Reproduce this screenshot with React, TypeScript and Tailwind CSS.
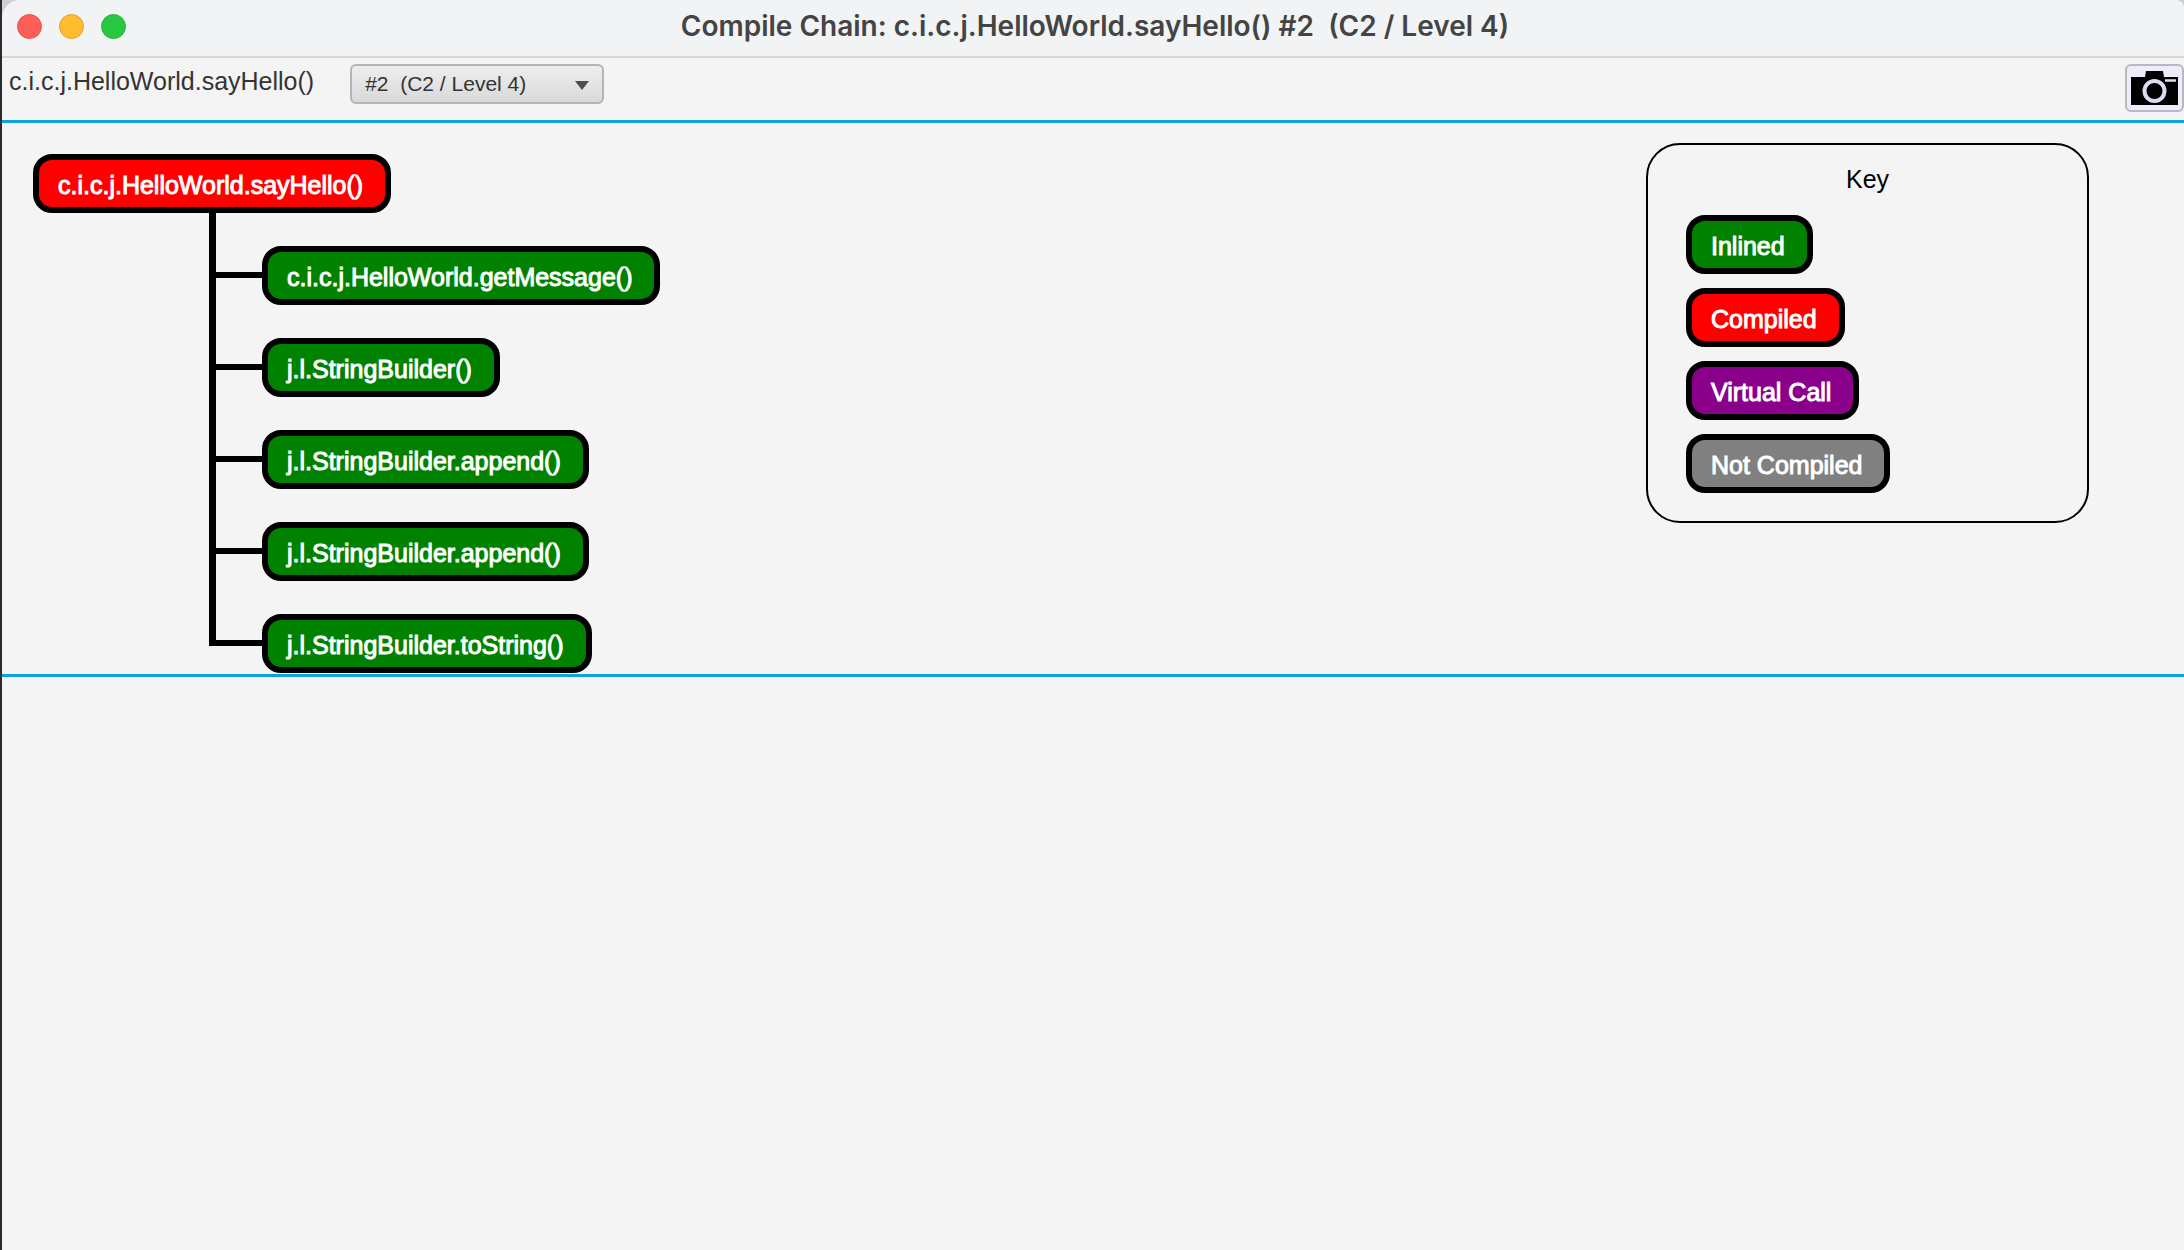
import React, { useState } from 'react';
import clsx from 'clsx';

type NodeKind = 'inlined' | 'compiled' | 'virtual' | 'notCompiled';

interface ChainNodeProps {
  kind: NodeKind;
  label: string;
}

const kindColors: Record<NodeKind, string> = {
  inlined: 'bg-[#008200]',
  compiled: 'bg-[#ff0000]',
  virtual: 'bg-[#8b008b]',
  notCompiled: 'bg-[#808080]',
};

const callees: { id: number; label: string }[] = [
  { id: 1, label: 'c.i.c.j.HelloWorld.getMessage()' },
  { id: 2, label: 'j.l.StringBuilder()' },
  { id: 3, label: 'j.l.StringBuilder.append()' },
  { id: 4, label: 'j.l.StringBuilder.append()' },
  { id: 5, label: 'j.l.StringBuilder.toString()' },
];

const keyItems: ChainNodeProps[] = [
  { kind: 'inlined', label: 'Inlined' },
  { kind: 'compiled', label: 'Compiled' },
  { kind: 'virtual', label: 'Virtual Call' },
  { kind: 'notCompiled', label: 'Not Compiled' },
];

const compilations = ['#2\u00a0 (C2 / Level 4)'];

const ChainNode: React.FC<ChainNodeProps> = ({ kind, label }) => (
  <div
    className={clsx(
      'flex h-[59px] w-fit items-center rounded-[19px] border-[6px] border-black pt-0.5 pr-[22px] pl-[19px] text-[25px] leading-8 whitespace-nowrap text-white [-webkit-text-stroke:1px_white]',
      kindColors[kind]
    )}
  >
    {label}
  </div>
);

const CameraIcon = () => (
  <svg viewBox="0 0 47 34" className="h-[34px] w-[47px]" aria-hidden="true">
    <path d="M0 6H14L15 0H32L33 6H47V34H0Z" fill="#000" />
    <circle cx="23.5" cy="20" r="10" fill="none" stroke="#dcdcf0" strokeWidth="4" />
    <path d="M34 9.5H45" stroke="#dcdcf0" strokeWidth="2.5" />
  </svg>
);

const TitleBar: React.FC<{ title: string }> = ({ title }) => (
  <header className="flex h-[58px] items-center rounded-tl-[18px] rounded-tr-lg border-b-2 border-[#d6d6d6] bg-[#f1f3f5] pr-[11px] pb-1 pl-[15px]">
    <div className="flex flex-1 gap-[17px]">
      <button aria-label="Close" className="size-[25px] rounded-full border border-[#e9554d] bg-[#ff5f57]" />
      <button aria-label="Minimize" className="size-[25px] rounded-full border border-[#e0a32c] bg-[#febc2e]" />
      <button aria-label="Zoom" className="size-[25px] rounded-full border border-[#24b53a] bg-[#28c840]" />
    </div>
    <h1 className="font-[Inter,sans-serif] text-[28px] leading-8 font-semibold whitespace-pre text-[#444]">{title}</h1>
    <div className="flex-1" />
  </header>
);

const CallTree = () => (
  <div>
    <ChainNode kind="compiled" label="c.i.c.j.HelloWorld.sayHello()" />
    <ul className="ml-[176px]">
      {callees.map((callee, index) => (
        <li key={callee.id} className="flex">
          {/* Elbow connector, the trunk stops at the last callee */}
          <div className="flex w-[53px] flex-col">
            <div className="h-[65px] border-b-[6px] border-l-[7px] border-black" />
            {index < callees.length - 1 && <div className="flex-1 border-l-[7px] border-black" />}
          </div>
          <div className="pt-[33px]">
            <ChainNode kind="inlined" label={callee.label} />
          </div>
        </li>
      ))}
    </ul>
  </div>
);

const KeyPanel = () => (
  <section className="flex h-[380px] w-[443px] flex-col rounded-[34px] border-2 border-black px-[38px] pt-[18px]">
    <h2 className="text-center text-[25px] leading-8 text-black">Key</h2>
    <div className="mt-5 flex flex-col gap-3.5">
      {keyItems.map((item) => (
        <ChainNode key={item.kind} {...item} />
      ))}
    </div>
  </section>
);

const App: React.FC = () => {
  const [compilation, setCompilation] = useState(compilations[0]);

  return (
    <div className="min-h-screen border-l-2 border-[#2b2b2e] bg-[#cfd0d3] font-['Liberation_Sans',Arial,sans-serif]">
      <TitleBar title="Compile Chain: c.i.c.j.HelloWorld.sayHello() #2  (C2 / Level 4)" />

      <main className="min-h-[calc(100vh-58px)] bg-[#f4f4f4]">
        <div className="flex h-[62px] items-start pt-[6px] pl-[7px]">
          <label htmlFor="compilation" className="pt-px text-[25px] leading-8 text-[#333]">
            c.i.c.j.HelloWorld.sayHello()
          </label>
          <div className="relative ml-9">
            <select
              id="compilation"
              value={compilation}
              onChange={(e) => setCompilation(e.target.value)}
              className="h-10 w-[254px] appearance-none rounded-md border-2 border-[#b5b5b5] bg-linear-to-b from-[#eeeeee] to-[#d9d9d9] px-[13px] text-[21px] text-[#333]"
            >
              {compilations.map((value) => (
                <option key={value} value={value}>
                  {value}
                </option>
              ))}
            </select>
            <svg viewBox="0 0 14 9" className="pointer-events-none absolute top-[17px] right-[15px] h-[9px] w-[14px]" aria-hidden="true">
              <path d="M0 0H14L7 9Z" fill="#4d4d4d" />
            </svg>
          </div>
          <button
            aria-label="Save snapshot"
            className="ml-auto flex h-12 w-[59px] items-center justify-center rounded-md border-2 border-[#b8b8c4] bg-[#ececfa]"
          >
            <CameraIcon />
          </button>
        </div>

        <div className="flex items-start justify-between border-y-[3px] border-[#0ba5d9] pb-px pl-[31px]">
          <div className="pt-[31px]">
            <CallTree />
          </div>
          <div className="pt-5 pr-[95px]">
            <KeyPanel />
          </div>
        </div>
      </main>
    </div>
  );
};

export default App;
